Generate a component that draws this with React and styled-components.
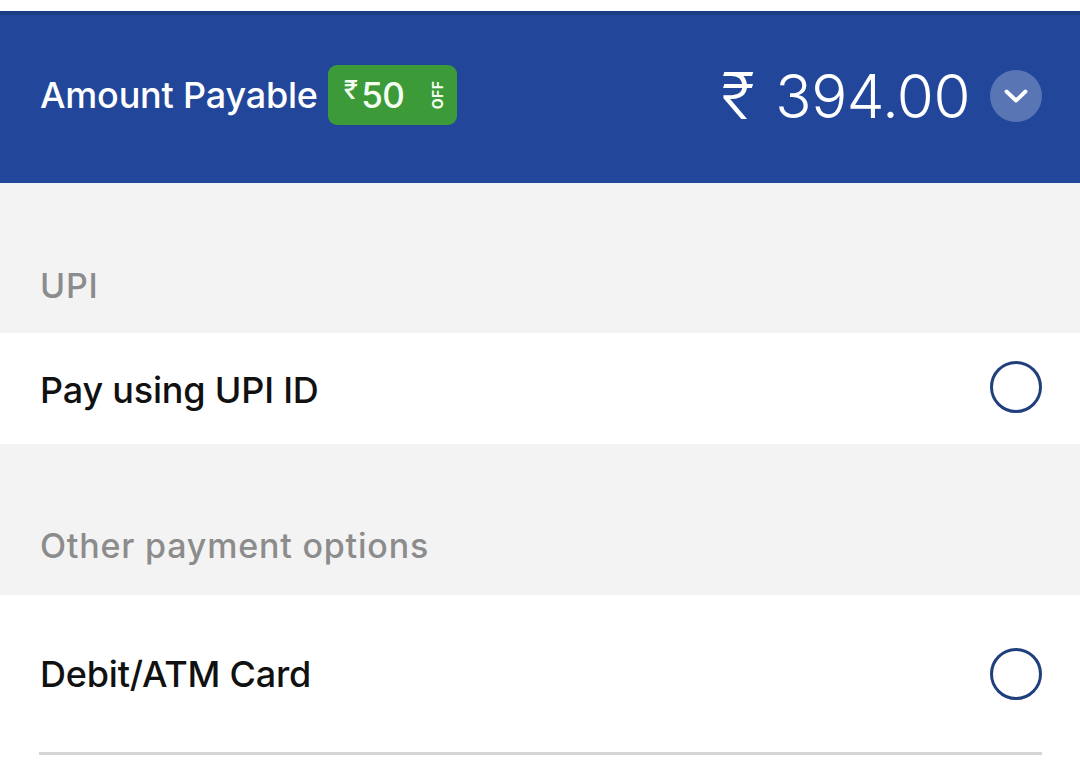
import React from "react";
import styled, { createGlobalStyle } from "styled-components";

const Global = createGlobalStyle`
  html, body { margin: 0; padding: 0; background: #ffffff; }
  body { font-family: Inter, "Liberation Sans", Arial, sans-serif; -webkit-font-smoothing: antialiased; }
  #root { min-height: 779px; }
`;

const Page = styled.div`
  width: 1080px;
  min-height: 779px;
  background: #ffffff;
  padding-top: 11px;
  box-sizing: border-box;
`;

const Header = styled.header`
  height: 172px;
  background: #22479a;
  border-top: 4px solid #1b3d82;
  box-sizing: border-box;
  padding: 0 38px 0 40px;
  display: flex;
  align-items: center;
  justify-content: space-between;
`;

const Left = styled.div`
  display: flex;
  align-items: center;
  gap: 10px;
  margin-top: -8px;
`;

const Title = styled.span`
  color: #ffffff;
  font-size: 36px;
  font-weight: 500;
  letter-spacing: -0.2px;
`;

const Badge = styled.div`
  width: 129px;
  height: 60px;
  border-radius: 9px;
  background: #3d9a39;
  display: flex;
  align-items: center;
  box-sizing: border-box;
  padding-left: 16px;
  color: #f4fff2;
  position: relative;
`;

const Rupee = styled.span`
  font-size: 26px;
  font-weight: 500;
  align-self: flex-start;
  margin-top: 9px;
  margin-right: 3px;
`;

const Off = styled.span`
  font-size: 35px;
  font-weight: 500;
  letter-spacing: -0.5px;
`;

const OffLabel = styled.span`
  position: absolute;
  right: 5px;
  top: 50%;
  transform: translateY(-50%) rotate(-90deg);
  font-size: 14px;
  font-weight: 700;
  letter-spacing: 0.5px;
`;

const Right = styled.div`
  display: flex;
  align-items: center;
  gap: 20px;
  margin-top: -7px;
`;

const Amount = styled.span`
  color: #ffffff;
  font-size: 60px;
  font-weight: 300;
  letter-spacing: -0.5px;
  display: flex;
  align-items: center;
  gap: 21px;
`;

const AmountRupee = styled.span`
  font-size: 64px;
  font-weight: 300;
`;

const Toggle = styled.div`
  width: 52px;
  height: 52px;
  border-radius: 50%;
  background: rgba(255, 255, 255, 0.25);
  display: flex;
  align-items: center;
  justify-content: center;
`;

const SectionLabel = styled.div`
  height: ${(p) => p.$h}px;
  background: #f3f3f3;
  box-sizing: border-box;
  padding: 0 40px ${(p) => p.$pb}px;
  display: flex;
  align-items: flex-end;
  color: #8c8c8c;
  font-size: 34px;
  font-weight: 500;
  letter-spacing: 0.8px;
`;

const Row = styled.div`
  height: ${(p) => p.$h}px;
  background: #ffffff;
  box-sizing: border-box;
  padding: 0 38px 0 40px;
  display: flex;
  align-items: center;
  justify-content: space-between;
`;

const RowText = styled.span`
  color: #111111;
  font-size: 36px;
  font-weight: 500;
  letter-spacing: -0.2px;
  margin-top: ${(p) => p.$mt || 0}px;
`;

const Radio = styled.span`
  width: 52px;
  height: 52px;
  border-radius: 50%;
  border: 3px solid #203f7c;
  box-sizing: border-box;
  margin-top: ${(p) => p.$mt || 0}px;
`;

const Divider = styled.div`
  height: 3px;
  margin: 0 38px 0 39px;
  background: #d5d5d5;
`;

export default function App() {
  return (
    <>
      <Global />
      <Page>
        <Header>
          <Left>
            <Title>Amount Payable</Title>
            <Badge>
              <Rupee>₹</Rupee>
              <Off>50</Off>
              <OffLabel>OFF</OffLabel>
            </Badge>
          </Left>
          <Right>
            <Amount>
              <AmountRupee>₹</AmountRupee>
              394.00
            </Amount>
            <Toggle>
              <svg width="26" height="18" viewBox="0 0 26 18" fill="none">
                <path d="M3.5 4.5 L13 13.5 L22.5 4.5" stroke="#fff" strokeWidth="3.8" strokeLinecap="round" strokeLinejoin="round" />
              </svg>
            </Toggle>
          </Right>
        </Header>
        <SectionLabel $h={150} $pb={27}>UPI</SectionLabel>
        <Row $h={111}>
          <RowText $mt={3}>Pay using UPI ID</RowText>
          <Radio $mt={-3} />
        </Row>
        <SectionLabel $h={151} $pb={29}>Other payment options</SectionLabel>
        <Row $h={157}>
          <RowText>Debit/ATM Card</RowText>
          <Radio $mt={0} />
        </Row>
        <Divider />
      </Page>
    </>
  );
}
